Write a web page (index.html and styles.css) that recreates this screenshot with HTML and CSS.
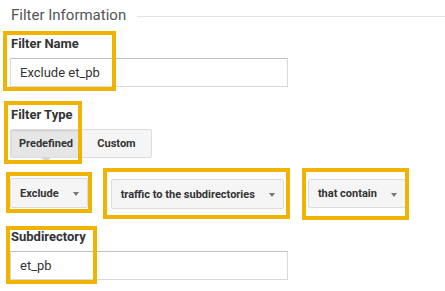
FILE: index.html
```html
<!DOCTYPE html>
<html lang="en">
  <head>
    <meta charset="UTF-8" />
    <meta name="viewport" content="width=device-width, initial-scale=1.0" />
    <title>Filter Information</title>
    <link rel="stylesheet" href="styles.css">
  </head>
  <body>
    <main class="panel">
      <!-- section heading -->
      <header class="panel-head">
        <h2 class="panel-title">Filter Information</h2>
        <span class="panel-rule"></span>
      </header>

      <div class="field">
        <label class="field-label" for="filter-name">Filter Name</label>
        <input class="field-input" type="text" id="filter-name" value="Exclude et_pb" />
      </div>

      <div class="field">
        <span class="field-label">Filter Type</span>
        <div class="toggle">
          <button class="toggle-btn is-active" type="button">Predefined</button
          ><button class="toggle-btn" type="button">Custom</button>
        </div>
      </div>

      <div class="field select-row">
        <button class="select" type="button">Exclude <span class="caret"></span></button>
        <button class="select" type="button">traffic to the subdirectories <span class="caret"></span></button>
        <button class="select" type="button">that contain <span class="caret"></span></button>
      </div>

      <div class="field">
        <label class="field-label" for="subdir">Subdirectory</label>
        <input class="field-input" type="text" id="subdir" value="et_pb" />
      </div>

      <!-- annotation boxes -->
      <span class="mark mark-name"></span>
      <span class="mark mark-type"></span>
      <span class="mark mark-exclude"></span>
      <span class="mark mark-traffic"></span>
      <span class="mark mark-contain"></span>
      <span class="mark mark-subdir"></span>
    </main>
  </body>
</html>
```

FILE: styles.css
```css
/* resets */
* {
  padding: 0;
  margin: 0;
  box-sizing: border-box;
}
body {
  font-family: "Roboto", "Liberation Sans", sans-serif;
  background: #fff;
  color: #333;
}

.panel {
  position: relative;
  width: 445px;
  height: 291px;
  padding: 5px 0 0 10px;
}

/* heading */
.panel-head {
  display: flex;
  align-items: center;
}
.panel-title {
  font-size: 15px;
  font-weight: 400;
  line-height: 20px;
  color: #555;
  padding-left: 1px;
}
.panel-rule {
  flex: 1;
  height: 1px;
  margin: 3px 0 0 11px;
  background-color: #e3e3e3;
}

/* fields */
.field {
  margin-top: 20px;
}
.panel-head + .field {
  margin-top: 11px;
}
.field-label {
  display: block;
  font-size: 13px;
  font-weight: 700;
  line-height: 16px;
  color: #333;
  padding-left: 1px;
  margin-bottom: 6px;
}
.field-input {
  display: block;
  width: 278px;
  height: 29px;
  padding: 0 9px;
  font-family: inherit;
  font-size: 13px;
  color: #333;
  border: 1px solid #d9d9d9;
  border-top-color: #c0c0c0;
  border-radius: 0;
  outline: none;
}

/* predefined / custom */
.toggle {
  display: flex;
}
.toggle-btn {
  position: relative;
  height: 29px;
  width: 72px;
  font-family: inherit;
  font-size: 11px;
  font-weight: 700;
  color: #333;
  background-color: #f5f5f5;
  border: 1px solid #dcdcdc;
  border-radius: 2px;
}
.toggle-btn + .toggle-btn {
  width: 71px;
  margin-left: -1px;
}
.toggle-btn.is-active {
  background-color: #e6e6e6;
  box-shadow: inset 0 1px 2px rgba(0, 0, 0, 0.12);
}
.toggle-btn.is-active::after {
  content: "";
  position: absolute;
  left: 50%;
  bottom: -5px;
  margin-left: -5px;
  border-left: 5px solid transparent;
  border-right: 5px solid transparent;
  border-top: 4px solid #d6d6d6;
}

/* dropdown row */
.select-row {
  display: flex;
  align-items: flex-start;
}
.select {
  display: flex;
  align-items: center;
  gap: 14px;
  height: 30px;
  padding: 0 8px 0 9px;
  font-family: inherit;
  font-size: 11px;
  font-weight: 700;
  color: #333;
  background-color: #f5f5f5;
  border: 1px solid #dcdcdc;
  border-radius: 2px;
  margin-right: 23px;
}
.select:nth-child(2) {
  margin-top: 1px;
  margin-right: 24px;
}
.select:nth-child(3) {
  margin-top: 1px;
  height: 29px;
}
.caret {
  width: 0;
  height: 0;
  margin-top: 2px;
  border-left: 3.5px solid transparent;
  border-right: 3.5px solid transparent;
  border-top: 4px solid #777;
}

/* yellow annotation boxes */
.mark {
  position: absolute;
  border: 4px solid #f0b400;
  pointer-events: none;
}
.mark-name {
  left: 3px;
  top: 31px;
  width: 113px;
  height: 60px;
}
.mark-type {
  left: 4px;
  top: 101px;
  width: 78px;
  height: 63px;
}
.mark-exclude {
  left: 6px;
  top: 172px;
  width: 86px;
  height: 41px;
}
.mark-traffic {
  left: 103px;
  top: 168px;
  width: 187px;
  height: 51px;
}
.mark-contain {
  left: 302px;
  top: 168px;
  width: 107px;
  height: 52px;
}
.mark-subdir {
  left: 6px;
  top: 226px;
  width: 91px;
  height: 58px;
}
```
